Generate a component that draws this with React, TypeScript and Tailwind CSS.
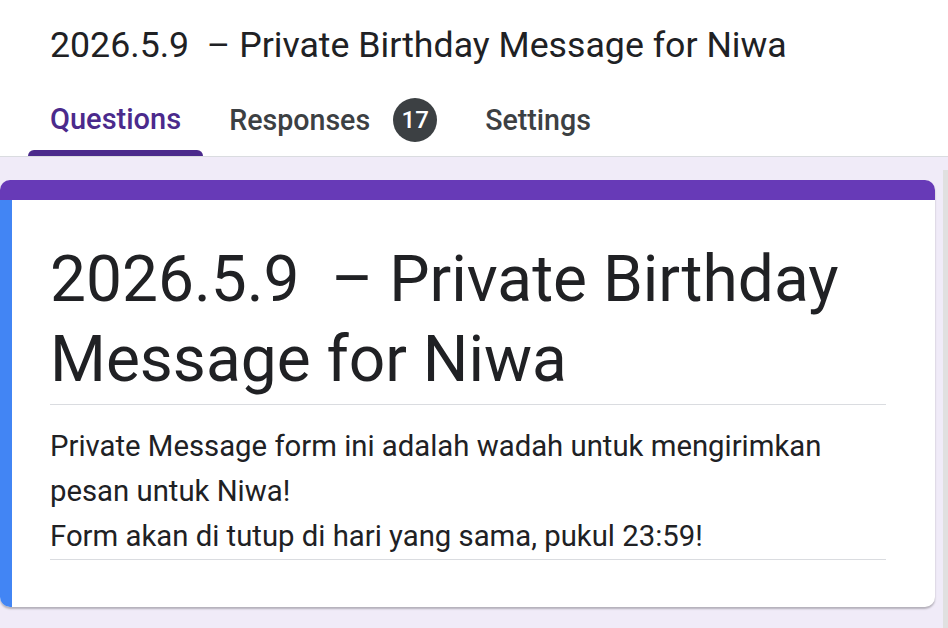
import React from "react";

const title = "2026.5.9  – Private Birthday Message for Niwa";

function Tab({ label, active, badge }: { label: string; active?: boolean; badge?: string }) {
  return (
    <div className="relative flex h-full items-center px-[24px] pb-[6px]">
      <span
        className={
          active
            ? "text-[29px] font-medium text-[#4b2a8c]"
            : "text-[28.6px] font-medium text-[#3c4043]"
        }
      >
        {label}
      </span>
      {badge && (
        <span className="ml-[23px] flex h-[44px] w-[44px] items-center justify-center rounded-full bg-[#3c4043] text-[24px] font-medium text-white">
          {badge}
        </span>
      )}
      {active && (
        <div className="absolute bottom-0 left-[2px] right-[2px] h-[6px] rounded-t-[6px] bg-[#4b2a8c]" />
      )}
    </div>
  );
}

export default function App() {
  return (
    <div
      className="flex h-[628px] w-[948px] flex-col overflow-hidden bg-[#f0ebf8]"
      style={{ fontFamily: "Roboto, 'Open Sans', sans-serif" }}
    >
      {/* header */}
      <header className="bg-white">
        <h1 className="whitespace-pre pl-[50px] pt-[24px] text-[35.7px] leading-[42px] text-[#202124]">
          {title}
        </h1>
        <nav className="mt-[24px] flex h-[66px] pl-[26px]">
          <Tab label="Questions" active />
          <Tab label="Responses" badge="17" />
          <Tab label="Settings" />
        </nav>
        <div className="h-px bg-[#dadce0]" />
      </header>

      <main className="flex flex-1 pt-[23px]">
        <div className="w-[935px] self-start overflow-hidden rounded-[10px] bg-white shadow-[0_2px_2px_rgba(0,0,0,0.25)]">
          <div className="h-[20px] bg-[#673ab7]" />
          <div className="flex">
            <div className="w-[12px] bg-[#4285f4]" />
            <div className="flex-1 pb-[47px] pl-[38px] pr-[49px] pt-[40px]">
              <h2 className="whitespace-pre-wrap border-b border-[#dadce0] pb-[4px] text-[64px] leading-[80px] text-[#202124]">
                {title}
              </h2>
              <p className="border-b border-[#dadce0] pt-[19px] text-[29.3px] leading-[45px] text-[#202124]">
                Private Message form ini adalah wadah untuk mengirimkan pesan untuk Niwa!
                <br />
                Form akan di tutup di hari yang sama, pukul 23:59!
              </p>
            </div>
          </div>
        </div>
        <div className="ml-[8px] mt-[-10px] w-[5px] self-stretch bg-[#e0e0e0]" />
      </main>
    </div>
  );
}
